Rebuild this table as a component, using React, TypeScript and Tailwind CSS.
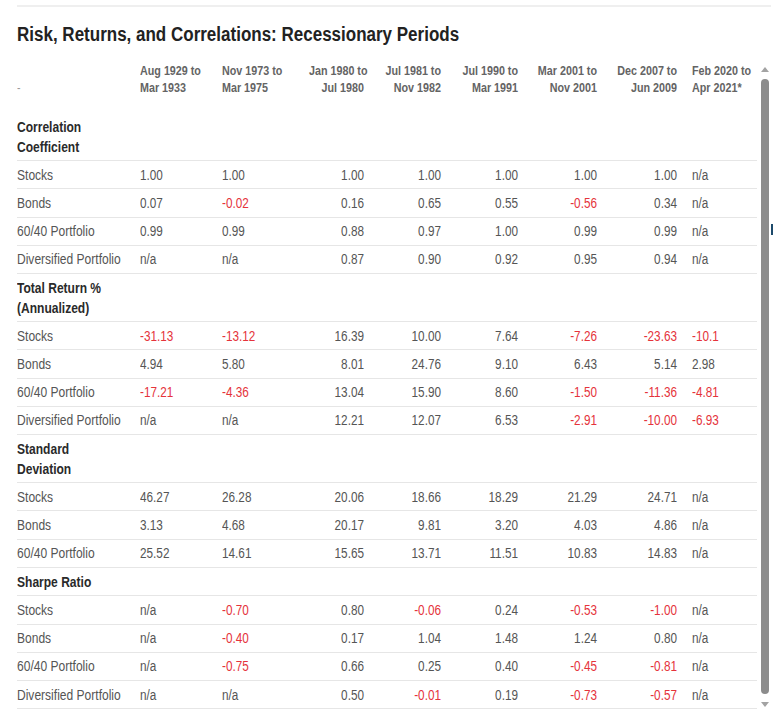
import React from 'react';

type Row = { label: string; values: string[] };
type Section = { title: React.ReactNode; rows: Row[] };

const periods: [string, string][] = [
  ['Aug 1929 to', 'Mar 1933'],
  ['Nov 1973 to', 'Mar 1975'],
  ['Jan 1980 to', 'Jul 1980'],
  ['Jul 1981 to', 'Nov 1982'],
  ['Jul 1990 to', 'Mar 1991'],
  ['Mar 2001 to', 'Nov 2001'],
  ['Dec 2007 to', 'Jun 2009'],
  ['Feb 2020 to', 'Apr 2021*'],
];

const sections: Section[] = [
  {
    title: (
      <>
        Correlation
        <br />
        Coefficient
      </>
    ),
    rows: [
      { label: 'Stocks', values: ['1.00', '1.00', '1.00', '1.00', '1.00', '1.00', '1.00', 'n/a'] },
      { label: 'Bonds', values: ['0.07', '-0.02', '0.16', '0.65', '0.55', '-0.56', '0.34', 'n/a'] },
      { label: '60/40 Portfolio', values: ['0.99', '0.99', '0.88', '0.97', '1.00', '0.99', '0.99', 'n/a'] },
      { label: 'Diversified Portfolio', values: ['n/a', 'n/a', '0.87', '0.90', '0.92', '0.95', '0.94', 'n/a'] },
    ],
  },
  {
    title: (
      <>
        Total Return %
        <br />
        (Annualized)
      </>
    ),
    rows: [
      { label: 'Stocks', values: ['-31.13', '-13.12', '16.39', '10.00', '7.64', '-7.26', '-23.63', '-10.1'] },
      { label: 'Bonds', values: ['4.94', '5.80', '8.01', '24.76', '9.10', '6.43', '5.14', '2.98'] },
      { label: '60/40 Portfolio', values: ['-17.21', '-4.36', '13.04', '15.90', '8.60', '-1.50', '-11.36', '-4.81'] },
      { label: 'Diversified Portfolio', values: ['n/a', 'n/a', '12.21', '12.07', '6.53', '-2.91', '-10.00', '-6.93'] },
    ],
  },
  {
    title: (
      <>
        Standard
        <br />
        Deviation
      </>
    ),
    rows: [
      { label: 'Stocks', values: ['46.27', '26.28', '20.06', '18.66', '18.29', '21.29', '24.71', 'n/a'] },
      { label: 'Bonds', values: ['3.13', '4.68', '20.17', '9.81', '3.20', '4.03', '4.86', 'n/a'] },
      { label: '60/40 Portfolio', values: ['25.52', '14.61', '15.65', '13.71', '11.51', '10.83', '14.83', 'n/a'] },
    ],
  },
  {
    title: 'Sharpe Ratio',
    rows: [
      { label: 'Stocks', values: ['n/a', '-0.70', '0.80', '-0.06', '0.24', '-0.53', '-1.00', 'n/a'] },
      { label: 'Bonds', values: ['n/a', '-0.40', '0.17', '1.04', '1.48', '1.24', '0.80', 'n/a'] },
      { label: '60/40 Portfolio', values: ['n/a', '-0.75', '0.66', '0.25', '0.40', '-0.45', '-0.81', 'n/a'] },
      { label: 'Diversified Portfolio', values: ['n/a', 'n/a', '0.50', '-0.01', '0.19', '-0.73', '-0.57', 'n/a'] },
    ],
  },
];

// first two and last period columns are left aligned, the rest right aligned
const rightAligned = [false, false, true, true, true, true, true, false];
const cellPad = ['', '', 'pr-2', 'pr-2', 'pr-2', 'pr-2', 'pr-2', 'pl-[7px]'];

const gridCols = 'grid grid-cols-[123px_82px_78px_72px_77px_77px_79px_80px_72px]';

// Liberation Sans squeezed horizontally stands in for the condensed face of the original
const Cell = ({ index, className = '', children }: { index: number; className?: string; children: React.ReactNode }) => (
  <div className={cellPad[index]}>
    <div
      className={`${rightAligned[index] ? 'origin-right text-right' : 'origin-left text-left'} whitespace-nowrap ${className}`}
    >
      {children}
    </div>
  </div>
);

const ScrollBar = () => (
  <div className="flex h-[651px] w-[13px] flex-col items-center pl-[2px]">
    <div className="mt-[5px] h-0 w-0 border-x-[4px] border-b-[5px] border-x-transparent border-b-[#a3a3a3]" />
    <div className="mt-[7px] w-[8px] flex-1 rounded-full bg-[#8c8c8c]" />
    <div className="mb-[6px] mt-[8px] h-0 w-0 border-x-[4px] border-t-[5px] border-x-transparent border-t-[#a3a3a3]" />
  </div>
);

export default function App() {
  return (
    <div
      className="relative h-[721px] w-[773px] overflow-hidden bg-white"
      style={{ fontFamily: '"Liberation Sans", Arial, sans-serif' }}
    >
      <div className="ml-[17px] mt-[5px] h-[2px] w-[754px] bg-[#efefef]" />
      <h1 className="ml-[17px] mt-[13px] origin-left scale-x-[0.85] whitespace-nowrap text-[20px] font-bold leading-[28px] text-[#222]">
        Risk, Returns, and Correlations: Recessionary Periods
      </h1>

      <div className="mt-[14px] flex">
        <div className="ml-[17px] h-[651px] w-[740px] overflow-hidden text-[14px]">
          <div className={`${gridCols} h-[51px] pt-[1px] text-[12.5px] font-bold leading-[17px] text-[#646464]`}>
            <div className="origin-left scale-x-[0.84] pt-[17px] font-normal text-[#9a9a9a]">-</div>
            {periods.map(([from, to], i) => (
              <Cell key={from} index={i} className="scale-x-[0.86]">
                {from}
                <br />
                {to}
              </Cell>
            ))}
          </div>

          {sections.map((section, s) => (
            <div key={s}>
              <div
                className={`${gridCols} border-b border-[#e6e6e6] font-bold leading-5 text-[#2a2a2a] ${
                  s === 3 ? 'h-[28.5px] items-center' : 'h-[48px] py-1'
                }`}
              >
                <div className="origin-left scale-x-[0.86] whitespace-nowrap">{section.title}</div>
              </div>
              {section.rows.map((row) => (
                <div
                  key={row.label}
                  className={`${gridCols} h-[28.25px] items-center border-b border-[#e6e6e6] leading-5`}
                >
                  <div className="origin-left scale-x-[0.86] whitespace-nowrap text-[#555]">{row.label}</div>
                  {row.values.map((v, i) => (
                    <Cell
                      key={i}
                      index={i}
                      className={`scale-x-[0.84] ${v.startsWith('-') ? 'text-[#e5333b]' : 'text-[#555]'}`}
                    >
                      {v}
                    </Cell>
                  ))}
                </div>
              ))}
            </div>
          ))}
        </div>
        <ScrollBar />
      </div>

      <div className="absolute right-0 top-[224px] h-[11px] w-[2px] bg-[#1d4a6b]" />
    </div>
  );
}
